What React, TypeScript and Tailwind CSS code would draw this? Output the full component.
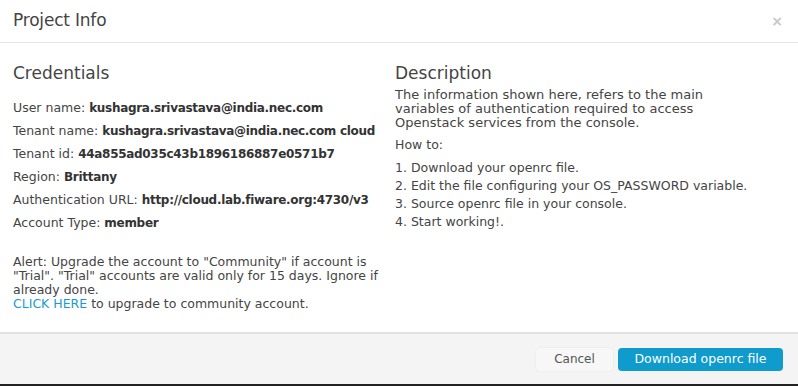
import React from "react";

const font = { fontFamily: '"DejaVu Sans", "Noto Sans", sans-serif' };

const credentials = [
  { label: "User name:", value: "kushagra.srivastava@india.nec.com" },
  { label: "Tenant name:", value: "kushagra.srivastava@india.nec.com cloud" },
  { label: "Tenant id:", value: "44a855ad035c43b1896186887e0571b7" },
  { label: "Region:", value: "Brittany" },
  { label: "Authentication URL:", value: "http://cloud.lab.fiware.org:4730/v3" },
  { label: "Account Type:", value: "member" },
];

const steps = [
  "1. Download your openrc file.",
  "2. Edit the file configuring your OS_PASSWORD variable.",
  "3. Source openrc file in your console.",
  "4. Start working!.",
];

export default function App() {
  return (
    <div
      className="w-[798px] h-[386px] bg-white flex flex-col text-[#333] border-b-2 border-[#222] overflow-hidden"
      style={font}
    >
      {/* Header */}
      <div className="h-[43px] shrink-0 flex items-center justify-between pl-[13px] pr-[15px] border-b border-[#e5e5e5]">
        <h4 className="text-[17px] text-[#444] tracking-[-0.2px]">Project Info</h4>
        <button className="text-[#c8c8c8] text-[14px] font-bold leading-none">×</button>
      </div>

      {/* Body */}
      <div className="flex-1 flex px-[13px] pt-[20px]">
        <div className="w-[382px] shrink-0">
          <h3 className="text-[17px] text-[#444] leading-[20px] mb-[16px]">Credentials</h3>
          <div className="flex flex-col gap-[5px] text-[12.5px] leading-[17px]">
            {credentials.map((c) => (
              <p key={c.label} className="text-[#444] leading-[18px]">
                {c.label}{" "}
                <span className="font-bold text-[#333] text-[12px] tracking-[-0.3px]">{c.value}</span>
              </p>
            ))}
          </div>
          <p className="mt-[23px] text-[12.5px] leading-[14px] text-[#444] w-[372px]">
            Alert: Upgrade the account to "Community" if account is "Trial". "Trial" accounts are
            valid only for 15 days. Ignore if already done.
            <br />
            <a className="text-[#1a9bd0]">CLICK HERE</a> to upgrade to community account.
          </p>
        </div>
        <div className="flex-1">
          <h3 className="text-[17px] text-[#444] leading-[20px] mb-[5px]">Description</h3>
          <p className="text-[13px] leading-[14px] text-[#444] w-[318px]">
            The information shown here, refers to the main variables of authentication required to
            access Openstack services from the console.
          </p>
          <p className="mt-[8px] text-[12.5px] leading-[14px] text-[#444]">How to:</p>
          <ol className="mt-[7px] text-[12.5px] leading-[18px] text-[#444]">
            {steps.map((s) => (
              <li key={s}>{s}</li>
            ))}
          </ol>
        </div>
      </div>

      {/* Footer */}
      <div className="h-[52px] shrink-0 bg-[#f4f4f4] border-t-2 border-[#e2e2e2] flex items-center justify-end gap-[5px] pr-[15px]">
        <button className="w-[77px] h-[23px] rounded-[4px] bg-[#f7f7f7] shadow-[0_0_2px_rgba(0,0,0,0.08)] text-[12px] text-[#555]">
          Cancel
        </button>
        <button className="w-[165px] h-[23px] rounded-[4px] bg-[#0f9bcc] text-[12.5px] text-white">
          Download openrc file
        </button>
      </div>
    </div>
  );
}
